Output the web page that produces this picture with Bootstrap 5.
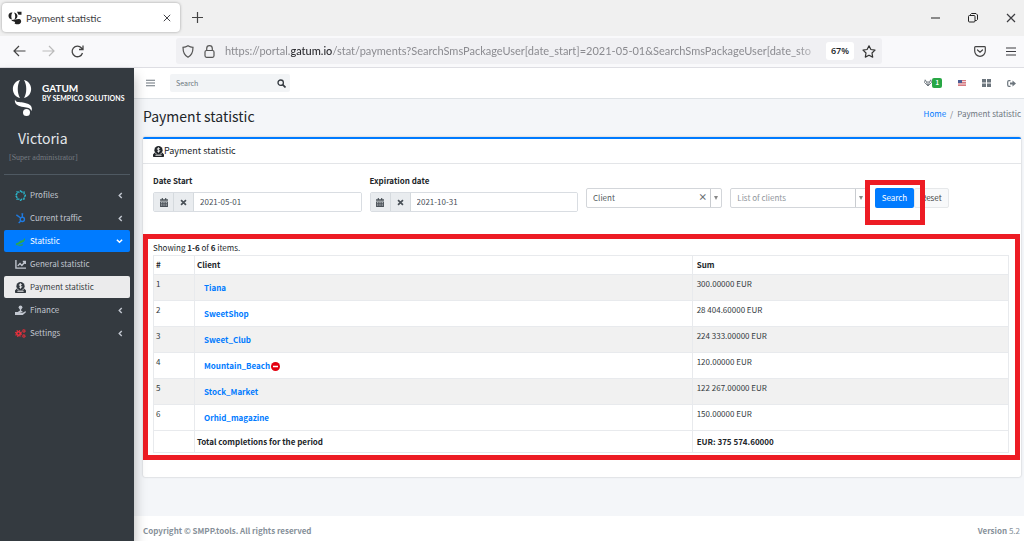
<!DOCTYPE html>
<html lang="en">
<head>
<meta charset="utf-8">
<meta name="viewport" content="width=device-width, initial-scale=1">
<title>Payment statistic</title>
<link href="https://cdn.jsdelivr.net/npm/bootstrap@5.3.0/dist/css/bootstrap.min.css" rel="stylesheet">
<style>
  :root { --app-font: "Noto Sans CJK SC", "Noto Sans", sans-serif; --chrome-font: Lato, "Open Sans", sans-serif; --mark-red: #ed1c24; --blue: #007bff; }
  body { font-family: var(--app-font); font-size: 8px; line-height: 14px; color: #212529; background: #f4f6f9; }
  a { text-decoration: none; color: var(--blue); }
  button { border: 0; background: none; padding: 0; color: inherit; line-height: inherit; font-size: inherit; }
  svg { display: block; flex: none; }

  /* browser window */
  .chrome { font-family: var(--chrome-font); color: #3c3c41; }
  .tabstrip { height: 36px; background: #f0f0f0; padding: 3px 8px 4px 2px; }
  .tab-item { width: 178px; background: #fff; border-radius: 4px; box-shadow: 0 0 3px rgba(0,0,0,.35); padding: 0 9px 0 6px; font-size: 10px; }
  .new-tab { margin-left: 12px; }
  .toolbar { height: 32px; background: #f9f9fb; border-bottom: 1px solid #dedee3; padding: 2px 8px 3px 13px; }
  .nav-keys { width: 163px; }
  .address { background: #f0f0f3; border-radius: 3px; padding: 0 6px; font-size: 11px; color: #8b8b90; min-width: 0; }
  .address-text { min-width: 0; overflow: hidden; white-space: nowrap; -webkit-mask-image: linear-gradient(90deg,#000 96%,transparent); mask-image: linear-gradient(90deg,#000 96%,transparent); }
  .address-text b { color: #2b2b30; font-weight: 500; }
  .zoom-level { background: #fff; border-radius: 3px; font-family: "Open Sans", sans-serif; font-size: 9px; font-weight: 600; padding: 2px 5px; }
  .window-menu { width: 134px; }

  /* sidebar */
  .side { width: 134px; background: #343a40; color: #c2c7d0; box-shadow: 0 8px 12px rgba(0,0,0,.3); z-index: 2; padding: 0 4px; }
  .brand { padding: 11px 0 0 8px; color: #fff; font-family: Lato, sans-serif; font-weight: 700; height: 54px; }
  .brand-name { font-size: 10px; line-height: 11px; }
  .brand-sub { font-size: 7px; line-height: 9px; white-space: nowrap; }
  .user-name { font-size: 14px; line-height: 20px; color: #e4e7eb; padding-left: 14px; margin-top: 6px; }
  .user-role { font-family: "Liberation Serif", serif; font-size: 8px; line-height: 10px; color: #757b81; padding: 5px 0 0 5px; height: 27px; border-bottom: 1px solid #4f5962; }
  .menu { padding-top: 9px; gap: 1px; }
  .menu a { height: 22px; padding: 0 7px 0 11px; color: #c2c7d0; border-radius: 2px; display: flex; align-items: center; gap: 4px; }
  .menu a.open { background: var(--blue); color: #fff; }
  .menu a.here { background: #ebebec; color: #343a40; }

  /* page */
  .topbar { height: 31px; background: #fff; border-bottom: 1px solid #dee2e6; padding: 0 8px 0 12px; color: #6c757d; }
  .find { width: 120px; height: 18px; background: #f2f4f6; border-radius: 2px; margin-left: 15px; }
  .find input { border: 0; background: none; font-size: 7px; width: 90px; padding: 0 6px; color: #495057; }
  .find input::placeholder { color: #6c757d; }
  .bell-count { background: #28a745; color: #fff; font-size: 6px; line-height: 10px; border-radius: 2px; padding: 0 3px; font-weight: 700; }
  .page-head { height: 38px; padding: 0 3px 0 9px; }
  .page-head h1 { font-size: 14px; line-height: 20px; font-weight: 400; margin: 7px 0 0; }
  .panel { margin: 0 3px 0 9px; background: #fff; border-top: 2px solid var(--blue); box-shadow: 0 0 2px rgba(0,0,0,.25); border-radius: 2px; }
  .panel-title { height: 25px; border-bottom: 1px solid #e3e5e8; padding-left: 10px; font-size: 9px; }
  .filters { padding: 10px 10px 0; height: 70px; }
  .filters label { font-weight: 700; line-height: 14px; margin-bottom: 4px; display: block; }
  .date-box { height: 20px; border: 1px solid #d9dde2; border-radius: 2px; }
  .date-box button { background: #e9ecef; border-right: 1px solid #d5dade; width: 20px; color: #495057; display: flex; align-items: center; justify-content: center; }
  .date-box input { border: 0; font-size: 8px; padding: 0 6px; min-width: 0; flex: 1; color: #495057; background: #fff; }
  .pick { height: 20px; border: 1px solid #d3d6da; border-radius: 2px; margin-top: 14px; position: relative; }
  .pick select { appearance: none; border: 0; background: none; width: 100%; height: 18px; font-size: 8px; line-height: 18px; padding: 0 6px; color: #555b61; }
  .pick select.empty { color: #8f959b; }
  .pick .arrow { position: absolute; right: 0; top: 0; bottom: 0; width: 11px; border-left: 1px solid #c9ccd0; display: flex; align-items: center; justify-content: center; pointer-events: none; }
  .pick .clear { position: absolute; right: 14px; top: 0; color: #6b7075; line-height: 16px; font-weight: 700; font-size: 9px; }
  .act { height: 20px; border-radius: 2px; padding: 0 7px; line-height: 18px; margin-top: 14px; }
  .act-go { background: var(--blue); color: #fff; }
  .act-reset { background: #f8f9fa; border: 1px solid #e6e8ea; color: #444; padding: 0 6px; }
  .marked { position: relative; height: 34px; }
  .marked::after { content: ""; position: absolute; inset: 6px -11px -17px -10px; border: 5px solid var(--mark-red); pointer-events: none; }
  .results { border: 5px solid var(--mark-red); margin: 0 1px 17px 0; padding: 2px 6px 2px 5px; }
  .summary { line-height: 14px; }
  .grid-data { margin: 0; font-size: 8px; line-height: 14px; color: #343a40; }
  .grid-data > :not(caption) > * > * { padding: 2px; border: 1px solid #e8eaed; background: none; box-shadow: none; }
  .grid-data > :not(caption) > * > :last-child { padding-left: 4px; }
  .grid-data thead th { height: 19px; color: #212529; }
  .grid-data tbody td { height: 26px; }
  .grid-data tbody tr:nth-child(odd) { background: #f1f1f1; }
  .grid-data tbody .client { font-weight: 700; padding: 6px 2px 4px 9px; }
  .grid-data .client div { gap: 1px; }
  .grid-data tfoot td { height: 22px; font-weight: 700; vertical-align: middle; color: #212529; }
  .col-num { width: 41px; }
  .col-sum { width: 37%; }
  .foot { height: 25px; background: #fff; padding: 5px 4px 0 9px; color: #869099; margin-top: auto; }
</style>
</head>
<body class="d-flex flex-column min-vh-100">

<svg width="0" height="0" class="position-absolute" aria-hidden="true">
  <symbol id="coin" viewBox="0 0 16 16"><circle cx="8" cy="6" r="6" fill="currentColor"/><path fill="currentColor" d="M2.500 9.500 0 12.500V15a1 1 0 0 0 1 1h14a1 1 0 0 0 1-1v-2.500l-2.500-3-2 2.500h-7z"/><path d="M3.500 13.500h9" stroke="#fff" stroke-width="1.200"/><path d="M9.900 3.800C7.500 2.600 6 3.300 6 4.500c0 1.500 4 .7 4 2.400C10 8.200 7.700 8.500 6 7.400M8 2v7.800" fill="none" stroke="#fff" stroke-width="1.100"/></symbol>
  <symbol id="chev" viewBox="0 0 6 8"><path d="M4.500 1 1.500 4l3 3" fill="none" stroke="currentColor" stroke-width="1.700"/></symbol>
  <symbol id="cal" viewBox="0 0 14 16"><path fill="currentColor" fill-rule="evenodd" d="M3 0h2v2h4V0h2v2h3v3H0V2h3zM0 6h14v10H0zm2 1.500v2h2v-2zm4 0v2h2v-2zm4 0v2h2v-2zm-8 4v2h2v-2zm4 0v2h2v-2zm4 0v2h2v-2z"/></symbol>
  <symbol id="ex" viewBox="0 0 10 10"><path d="m1.500 1.500 7 7m0-7-7 7" stroke="currentColor" stroke-width="2.400"/></symbol>
  <symbol id="xthin" viewBox="0 0 10 10"><path d="m1 1 8 8m0-8-8 8" stroke="currentColor" stroke-width="1.200"/></symbol>
  <symbol id="bars" viewBox="0 0 10 10"><path d="M0 1.500h10M0 5h10M0 8.500h10" stroke="currentColor" stroke-width="1.200"/></symbol>
  <symbol id="gear" viewBox="0 0 12 12"><circle cx="6" cy="6" r="3" fill="none" stroke="currentColor" stroke-width="2.600"/><circle cx="6" cy="6" r="5" fill="none" stroke="currentColor" stroke-width="2" stroke-dasharray="2 1.930"/></symbol>
</svg>

<header class="chrome">
  <div class="tabstrip d-flex align-items-stretch">
    <div class="tab-item d-flex align-items-center">
      <svg width="14" height="14" viewBox="0 0 14 14" fill="#222"><path d="M4.500 1.500C-.5.500-1 8 4 8.500 3 6 3 3.500 4.500 1.500zM6 1.500c1.500 2 1.500 4.500.5 7C10 8 11 2.500 6 1.500zM9 .8h4.500v3h-3zM3.500 9C7 9 12 6.500 13 9.500c1 3-3 4.500-5.500 3.500s1-1.500-1-2.200S3.500 10 3.500 9z"/></svg>
      <span class="ms-1 flex-grow-1">Payment statistic</span>
      <button aria-label="Close tab"><svg width="8" height="8"><use href="#xthin"/></svg></button>
    </div>
    <button class="new-tab" aria-label="New tab"><svg width="11" height="11" viewBox="0 0 11 11"><path d="M5.500 0v11M0 5.500h11" stroke="#444" stroke-width="1.200"/></svg></button>
    <div class="d-flex align-items-center ms-auto gap-4">
      <button class="me-1" aria-label="Minimize"><svg width="9" height="10" viewBox="0 0 9 10"><path d="M0 5h9" stroke="#222"/></svg></button>
      <button class="me-1" aria-label="Restore"><svg width="10" height="10" viewBox="0 0 10 10" fill="none" stroke="#222"><rect x=".5" y="2.500" width="6.500" height="6.500" rx="1"/><path d="M2.500 2.500v-1l1-1H8L9.500 2v4.500l-1 1H7"/></svg></button>
      <button aria-label="Close window"><svg width="10" height="10"><use href="#xthin"/></svg></button>
    </div>
  </div>
  <div class="toolbar d-flex align-items-stretch">
    <div class="nav-keys d-flex align-items-center gap-3 flex-shrink-0">
      <button aria-label="Back"><svg width="13" height="12" viewBox="0 0 13 12" fill="none" stroke="#444" stroke-width="1.200"><path d="M12.500 6H1m5-5L1 6l5 5"/></svg></button>
      <button aria-label="Forward"><svg width="13" height="12" viewBox="0 0 13 12" fill="none" stroke="#bbb" stroke-width="1.200"><path d="M.5 6H12M7 1l5 5-5 5"/></svg></button>
      <button aria-label="Reload"><svg width="13" height="13" viewBox="0 0 13 13" fill="none" stroke="#444" stroke-width="1.300"><path d="M11.500 8A5.300 5.300 0 1 1 10.500 3L12 4.500M12 .5v4H8"/></svg></button>
    </div>
    <div class="address d-flex align-items-center flex-grow-1">
      <svg width="12" height="13" viewBox="0 0 12 13" fill="none" stroke="#555" stroke-width="1.200"><path d="M6 .8c1.500 1 3 1.500 5 1.500 0 4.500-1 8-5 10-4-2-5-5.500-5-10 2 0 3.500-.5 5-1.500z"/></svg>
      <svg class="ms-2 me-2" width="15" height="13" viewBox="0 0 15 13" fill="none" stroke="#555" stroke-width="1.200"><rect x="3" y="5.500" width="9" height="6.800" rx="1.500"/><path d="M4.700 5.500V3.500a2.800 2.800 0 0 1 5.600 0v2"/></svg>
      <div class="address-text flex-grow-1">https://portal.<b>gatum.io</b>/stat/payments?SearchSmsPackageUser[date_start]=2021-05-01&amp;SearchSmsPackageUser[date_sto</div>
      <button class="zoom-level ms-1 me-2 text-dark">67%</button>
      <button aria-label="Bookmark"><svg width="14" height="13" viewBox="0 0 14 13" fill="none" stroke="#333" stroke-width="1.200" stroke-linejoin="round"><path d="m7 .8 1.900 3.700 4.100.6-3 2.900.7 4.100L7 10.200l-3.700 1.900L4 8 1 5.100l4.100-.6z"/></svg></button>
    </div>
    <div class="window-menu d-flex align-items-center justify-content-end flex-shrink-0">
      <button class="me-3" aria-label="Save to Pocket"><svg width="12" height="11" viewBox="0 0 12 11" fill="none" stroke="#444" stroke-width="1.200" stroke-linecap="round"><path d="M1.500.7h9q.8 0 .8.800V5A5.300 5.300 0 0 1 .7 5V1.500q0-.8.8-.8zM3.500 4 6 6.300 8.500 4"/></svg></button>
      <button class="ms-1" aria-label="Menu"><svg width="10" height="11"><use href="#bars"/></svg></button>
    </div>
  </div>
</header>

<div class="d-flex flex-grow-1">
  <aside class="side flex-shrink-0">
    <div class="brand d-flex align-items-start">
      <svg width="22" height="38" viewBox="0 0 22 38" fill="#fff"><path d="M8 1C-1.500 3-1.500 17 8 19 5 14 5 6 8 1zM12 1c3 5 3 13 0 18 9.500-2 9.500-16 0-18zM3 20.500c1 3 4 2.500 8 3 7 1 10 4 8.500 8.500-1-3-4-3.500-8-4C6 27.500 2 25 3 20.500z"/><circle cx="14.500" cy="33.500" r="3.500"/></svg>
      <div class="ms-2 mt-1"><div class="brand-name">GATUM</div><div class="brand-sub">BY SEMPICO SOLUTIONS</div></div>
    </div>
    <div class="user-name">Victoria</div>
    <div class="user-role">[Super administrator]</div>
    <nav class="menu d-flex flex-column">
      <a href="#"><svg width="11" height="11" viewBox="0 0 12 12" fill="none" stroke="#2bb3c8" stroke-width="1.500"><path d="m6 1 1.500 1.300 2.300-.1.200 2.300L11.500 6 10 7.700l-.2 2.200-2.300.1L6 11.300 4.400 10l-2.300-.1L2 7.700.6 6 2 4.400l.1-2.200 2.300.1z" stroke-dasharray="3 .8"/></svg><span>Profiles</span><svg class="ms-auto" width="5" height="7"><use href="#chev"/></svg></a>
      <a href="#"><svg width="11" height="11" viewBox="0 0 12 12" fill="none" stroke="#1f7ae0" stroke-width="1.500"><circle cx="8" cy="7" r="2.300"/><path d="M8 4.500V1M6.200 5.500 1.500 2M6.300 8.800 4 11M7 1h2"/></svg><span>Current traffic</span><svg class="ms-auto" width="5" height="7"><use href="#chev"/></svg></a>
      <a href="#" class="open"><svg width="11" height="11" viewBox="0 0 12 12" fill="#2ba84a"><path d="M1 8c3 0 4-3 6-3 1.500 0 3-1 4-3 0 4-2 5-4 5.500C5 8 4 9.500 1 10z"/><path d="M1 10.500c3 0 4-1.500 8-1.500l-1 1.500z"/></svg><span>Statistic</span><svg class="ms-auto" width="7" height="6" viewBox="0 0 8 6"><path d="m1 1.500 3 3 3-3" fill="none" stroke="currentColor" stroke-width="1.700"/></svg></a>
      <a href="#"><svg width="11" height="11" viewBox="0 0 12 12" fill="none" stroke="currentColor" stroke-width="1.500"><path d="M1 1v9h11M3 7.500 5.500 5l2 2L11 3M8.500 2.700h2.700v2.700"/></svg><span>General statistic</span></a>
      <a href="#" class="here"><svg width="11" height="11"><use href="#coin"/></svg><span>Payment statistic</span></a>
      <a href="#"><svg width="11" height="11" viewBox="0 0 12 12" fill="currentColor"><circle cx="6" cy="2.500" r="2"/><path d="M5.200 4h1.600v3H5.200zM0 7.500h3L4.500 6.500h3c1 0 1 1.500 0 1.500H6v.5h2.500l2.300-1.500c1-.3 1.500.7.8 1.300L8.500 11H0z"/></svg><span>Finance</span><svg class="ms-auto" width="5" height="7"><use href="#chev"/></svg></a>
      <a href="#"><svg width="11" height="11" viewBox="0 0 14 12" color="#f0303c"><use href="#gear" width="9" height="9" x="0" y="1.500"/><use href="#gear" width="5.500" height="5.500" x="8.500" y="0"/><use href="#gear" width="5.500" height="5.500" x="8.500" y="6.500"/></svg><span>Settings</span><svg class="ms-auto" width="5" height="7"><use href="#chev"/></svg></a>
    </nav>
  </aside>

  <div class="d-flex flex-column flex-grow-1 overflow-hidden">
    <div class="topbar d-flex align-items-center">
      <button aria-label="Toggle sidebar"><svg width="9" height="8" viewBox="0 0 10 10" preserveAspectRatio="none"><use href="#bars"/></svg></button>
      <form class="find d-flex align-items-center justify-content-between">
        <input type="search" placeholder="Search" aria-label="Search">
        <button type="button" class="me-1" aria-label="Search"><svg width="9" height="9" viewBox="0 0 9 9" fill="none" stroke="#343a40"><circle cx="3.700" cy="3.700" r="2.700" stroke-width="1.300"/><path d="m5.700 5.700 2.800 2.800" stroke-width="1.700"/></svg></button>
      </form>
      <div class="d-flex align-items-center ms-auto gap-3">
        <a href="#" class="d-flex align-items-center text-secondary" aria-label="Notifications"><svg width="8" height="8" viewBox="0 0 8 8" fill="none" stroke="currentColor" stroke-width=".9"><path d="M1.200.8.500 3.500 4 7l3.500-3.500L6.800.8 5.500 3h-3zM2.500 3 4 7l1.500-4"/></svg><span class="bell-count">1</span></a>
        <a href="#" aria-label="Language"><svg width="8" height="6" viewBox="0 0 8 6"><path fill="#f1dcdc" d="M0 0h8v6H0z"/><path d="M0 .5h8M0 2.500h8M0 4h8M0 5.500h8" stroke="#d0606a" stroke-width=".8"/><path fill="#4c5c94" d="M0 0h4v3H0z"/></svg></a>
        <a href="#" class="text-secondary" aria-label="Apps"><svg width="9" height="8" viewBox="0 0 9 8" fill="currentColor"><path d="M0 0h4v3.500H0zM5 0h4v3.500H5zM0 4.500h4V8H0zM5 4.500h4V8H5z"/></svg></a>
        <a href="#" class="text-secondary" aria-label="Sign out"><svg width="9" height="7" viewBox="0 0 9 7"><path d="M3.500.7H2Q.7.700.7 2v3q0 1.300 1.300 1.300h1.500" fill="none" stroke="currentColor" stroke-width="1.200"/><path fill="currentColor" d="M3 2.500h2.500v-2l3.500 3-3.500 3v-2H3z"/></svg></a>
      </div>
    </div>

    <div class="page-head d-flex justify-content-between">
      <h1>Payment statistic</h1>
      <nav class="d-flex gap-1 pt-2 text-secondary" aria-label="Breadcrumb"><a href="#">Home</a><span>/</span><span>Payment statistic</span></nav>
    </div>

    <main class="panel">
      <div class="panel-title d-flex align-items-center"><svg width="11" height="11"><use href="#coin"/></svg><span>Payment statistic</span></div>
      <form class="filters">
        <div class="row gx-2">
          <div class="col-3">
            <label for="date-from">Date Start</label>
            <div class="date-box d-flex align-items-stretch overflow-hidden"><button type="button" aria-label="Open calendar"><svg width="8" height="9"><use href="#cal"/></svg></button><button type="button" aria-label="Clear date"><svg width="7" height="7"><use href="#ex"/></svg></button><input id="date-from" type="text" value="2021-05-01"></div>
          </div>
          <div class="col-3">
            <label for="date-to">Expiration date</label>
            <div class="date-box d-flex align-items-stretch overflow-hidden"><button type="button" aria-label="Open calendar"><svg width="8" height="9"><use href="#cal"/></svg></button><button type="button" aria-label="Clear date"><svg width="7" height="7"><use href="#ex"/></svg></button><input id="date-to" type="text" value="2021-10-31"></div>
          </div>
          <div class="col-2"><div class="pick"><select aria-label="Type"><option>Client</option></select><button type="button" class="clear" aria-label="Clear">×</button><span class="arrow"><svg width="4" height="4" viewBox="0 0 4 4"><path fill="#888" d="M0 0h4L2 4z"/></svg></span></div></div>
          <div class="col-2"><div class="pick"><select class="empty" aria-label="List of clients"><option>List of clients</option></select><span class="arrow"><svg width="4" height="4" viewBox="0 0 4 4"><path fill="#888" d="M0 0h4L2 4z"/></svg></span></div></div>
          <div class="col-2 d-flex"><span class="marked"><button type="submit" class="act act-go">Search</button></span><button type="reset" class="act act-reset">Reset</button></div>
        </div>
      </form>
      <section class="results">
        <div class="summary">Showing <b>1-6</b> of <b>6</b> items.</div>
        <table class="table grid-data">
          <thead><tr><th class="col-num">#</th><th>Client</th><th class="col-sum">Sum</th></tr></thead>
          <tbody>
            <tr><td>1</td><td class="client"><a href="#">Tiana</a></td><td>300.00000 EUR</td></tr>
            <tr><td>2</td><td class="client"><a href="#">SweetShop</a></td><td>28 404.60000 EUR</td></tr>
            <tr><td>3</td><td class="client"><a href="#">Sweet_Club</a></td><td>224 333.00000 EUR</td></tr>
            <tr><td>4</td><td class="client"><div class="d-flex align-items-center"><a href="#">Mountain_Beach</a><svg width="9" height="9" viewBox="0 0 9 9"><circle cx="4.500" cy="4.500" r="4.500" fill="#e3000f"/><path d="M2 4.500h5" stroke="#fff" stroke-width="1.500"/></svg></div></td><td>120.00000 EUR</td></tr>
            <tr><td>5</td><td class="client"><a href="#">Stock_Market</a></td><td>122 267.00000 EUR</td></tr>
            <tr><td>6</td><td class="client"><a href="#">Orhid_magazine</a></td><td>150.00000 EUR</td></tr>
          </tbody>
          <tfoot><tr><td></td><td>Total completions for the period</td><td>EUR: 375 574.60000</td></tr></tfoot>
        </table>
      </section>
    </main>

    <footer class="foot d-flex align-items-center justify-content-between"><b>Copyright © SMPP.tools. All rights reserved</b><span><b>Version</b> 5.2</span></footer>
  </div>
</div>
<script src="https://cdn.jsdelivr.net/npm/bootstrap@5.3.0/dist/js/bootstrap.bundle.min.js"></script>
</body>
</html>
